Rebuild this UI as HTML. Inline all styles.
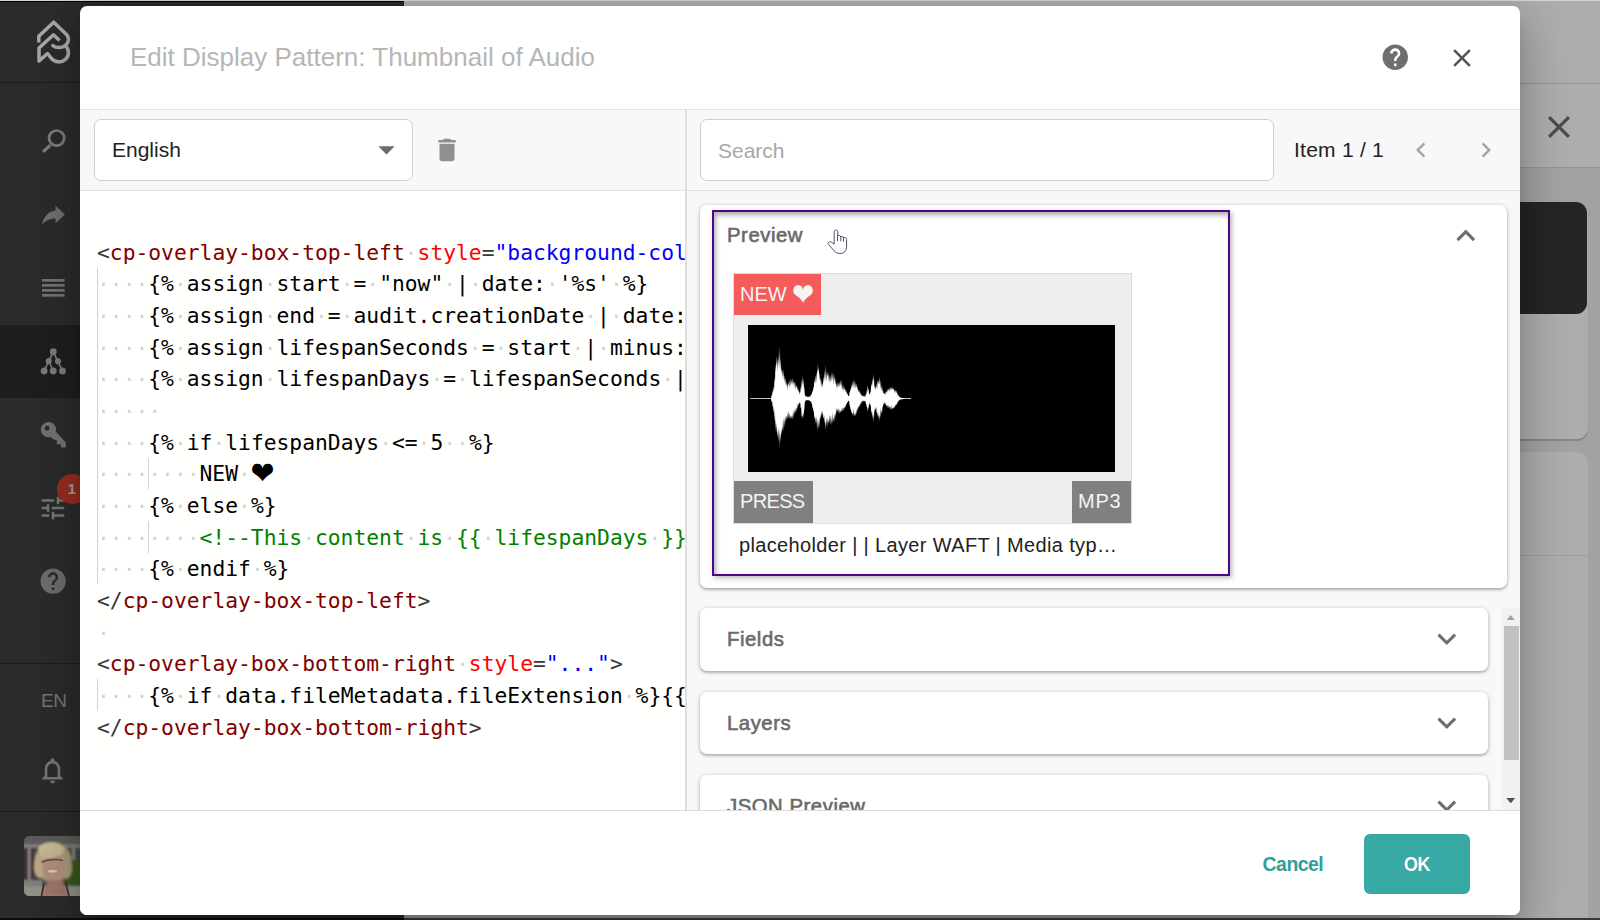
<!DOCTYPE html>
<html lang="en">
<head>
<meta charset="utf-8">
<title>Edit Display Pattern: Thumbnail of Audio</title>
<style>
*{box-sizing:border-box;margin:0;padding:0}
html,body{width:1600px;height:920px;overflow:hidden}
body{position:relative;font-family:"Liberation Sans",sans-serif;background:#a2a2a2;color:#222}
.abs{position:absolute}
/* ---------- page behind dialog ---------- */
#bgdark{left:0;top:0;width:404px;height:920px;background:#2a2a2a}
#bgright{left:404px;top:0;width:1196px;height:920px;background:#a2a2a2}
#topline{left:0;top:0;width:1600px;height:1px;background:#d6d6d6}
#topblack{left:0;top:1px;width:404px;height:1px;background:#000}
/* sidebar */
#side{left:0;top:0;width:80px;height:920px;background:#2b2b2b}
#side .div{position:absolute;left:0;width:80px;height:1px;background:#1c1c1c}
#side .active{position:absolute;left:0;top:325px;width:80px;height:73px;background:#1e1e1e}
#side svg{position:absolute}
/* ---------- dialog ---------- */
#dlg{left:80px;top:6px;width:1440px;height:909px;background:#fff;border-radius:7px;overflow:hidden;box-shadow:0 11px 15px -7px rgba(0,0,0,.2),0 24px 38px 3px rgba(0,0,0,.14),0 9px 46px 8px rgba(0,0,0,.12)}
#title{left:50px;top:34px;font-size:26px;color:#b6b6b6;white-space:nowrap;line-height:34px}
#hdrline{left:0;top:103px;width:1440px;height:1px;background:#e2e2e2}
#toolbar{left:0;top:104px;width:1440px;height:80px;background:#f8f8f8}
#tbline{left:0;top:184px;width:1440px;height:1px;background:#e0e0e0}
#vline{left:605px;top:104px;width:2px;height:700px;background:#dedede}
#select{left:14px;top:113px;width:319px;height:62px;background:#fff;border:1px solid #cecece;border-radius:7px}
#select span{position:absolute;left:17px;top:17px;font-size:21px;line-height:26px;color:#222}
#search{left:620px;top:113px;width:574px;height:62px;background:#fff;border:1px solid #cecece;border-radius:7px}
#search span{position:absolute;left:17px;top:17.5px;font-size:21px;line-height:26px;color:#a8a8a8}
#itemtxt{left:1214px;top:131px;font-size:21px;line-height:26px;color:#222;white-space:nowrap;letter-spacing:.25px}
/* editor */
#editor{left:0;top:185px;width:605px;height:619px;background:#fffffe;overflow:hidden}
.ln{position:absolute;left:17px;height:32px;line-height:32px;white-space:pre;font-family:"DejaVu Sans Mono","Liberation Mono",monospace;font-size:21.3px;color:#000}
.ws{color:#d2d2d2;font-family:"Liberation Mono",monospace;font-size:21.369px;position:relative;top:0}
.tg{color:#800000}.dl{color:#383838}.at{color:#ff0000}.st{color:#0000ff}.cm{color:#008000}
.hrt{font-family:"DejaVu Sans",sans-serif;font-size:28.7px;display:inline-block;line-height:20px;color:#000;transform:translate(-.3px,1.9px) scale(1,1.1)}
.guide{position:absolute;width:1px;background:#d3d3d3}
/* right panel */
#right{left:607px;top:185px;width:833px;height:619px;background:#f8f8f8;overflow:hidden}
.card{position:absolute;background:#fff;border-radius:7px;box-shadow:0 1px 4px rgba(0,0,0,.28),0 2px 2px rgba(0,0,0,.12)}
.card .lbl{position:absolute;left:27px;font-size:20.3px;color:#6a6a6a;-webkit-text-stroke:.6px #6a6a6a;letter-spacing:.55px;white-space:nowrap;line-height:27px}
#pbox{left:12px;top:5px;width:518px;height:366px;border:2px solid #4f0585;box-shadow:inset 2px 3px 5px rgba(0,0,0,.32),2px 2px 5px rgba(0,0,0,.28)}
#thumb{left:19px;top:61px;width:399px;height:251px;background:#eee;border:1px solid #dcdcdc}
.bdg{position:absolute;color:#f4f4f4;font-size:20px;line-height:41px;padding-left:6px;white-space:nowrap}
.bdg .wh{font-family:"DejaVu Sans",sans-serif;font-size:26.5px;display:inline-block;line-height:20px;transform:translate(-.2px,3px) scale(1,1.16);vertical-align:baseline}
#cap{left:25px;top:320px;font-size:20px;line-height:26px;color:#222;white-space:nowrap;letter-spacing:.35px}
.chev{left:727.7px;top:12px;width:37.6px;height:37.6px}
#sbar{left:815px;top:417px;width:18px;height:202px;background:#f1f1f1}
#sthumb{left:1.5px;top:18px;width:15px;height:134px;background:#c1c1c1}
/* footer */
#ftline{left:0;top:804px;width:1440px;height:1px;background:#dcdcdc}
#footer{left:0;top:805px;width:1440px;height:104px;background:#fff}
#ok{left:1284px;top:828px;width:106px;height:60px;border-radius:6px;background:#38a9a5;color:#fff;font-size:19.5px;font-weight:bold;text-align:center;line-height:60px;letter-spacing:-.6px}
#ok span{display:inline-block;transform:scaleX(.93)}
#cancel{left:1182.6px;top:844.5px;font-size:19.4px;font-weight:bold;color:#2ea09c;line-height:26px;letter-spacing:-.5px}
</style>
</head>
<body>
<div id="bgdark" class="abs"></div>
<div id="bgright" class="abs"></div>
<div id="side" class="abs">
  <div class="active"></div>
  <div class="div" style="top:82px"></div>
  <div class="div" style="top:663px"></div>
  <div class="div" style="top:811px"></div>
<!--sbicons-->
<svg style="left:20px;top:10px" width="70" height="70" viewBox="0 0 920 920"><g fill="none" stroke="#a7a7a7" stroke-width="46" stroke-linejoin="round" stroke-linecap="round"><path d="M247 428V345L443 160 608 318C650 362 645 430 592 470 650 510 650 600 600 648 545 700 455 690 410 632L362 572 250 670V500L440 325 520 400" stroke-linecap="butt"/><path d="M592 470C540 505 470 500 432 468"/></g></svg>
<svg style="left:30px;top:115px" width="50" height="50" viewBox="0 0 920 920"><g fill="none" stroke="#7b7b7b"><circle cx="490" cy="425" r="140" stroke-width="50"/><path d="M372 556L240 678" stroke-width="60"/></g></svg>
<svg style="left:30px;top:190px" width="50" height="50" viewBox="0 0 920 920"><path fill="#6f6f6f" d="M222 635C250 470 360 385 470 375V288L642 450 470 612V525C370 520 290 560 222 635z"/></svg>
<svg style="left:42px;top:279px" width="23" height="18" viewBox="0 0 23 18"><g fill="#737373"><rect x="0" y="0" width="22.6" height="2.7"/><rect x="0" y="5" width="22.6" height="2.7"/><rect x="0" y="10" width="22.6" height="2.7"/><rect x="0" y="15" width="22.6" height="2.7"/></g></svg>
<svg style="left:30px;top:337px" width="50" height="50" viewBox="0 0 920 920"><g stroke="#7a7a7a" stroke-width="30" fill="#7a7a7a"><path d="M428 272L260 625M345 445L428 625M428 272L598 625" fill="none"/><circle cx="428" cy="272" r="48" /><circle cx="345" cy="445" r="42"/><circle cx="515" cy="448" r="42"/><circle cx="260" cy="625" r="48"/><circle cx="428" cy="625" r="48"/><circle cx="598" cy="625" r="48"/></g></svg>
<svg style="left:30px;top:410px" width="50" height="50" viewBox="0 0 920 920"><path fill="#717171" fill-rule="evenodd" d="M340 222a140 140 0 1 0 40 274L430 540 495 560V630H570V690H660V600L476 400A140 140 0 0 0 340 222zM315 292a44 44 0 1 1 0 88 44 44 0 0 1 0-88z"/></svg>
<svg style="left:38.30px;top:493.00px" width="30.00" height="30.00" viewBox="0 0 24 24" ><path fill="#757575" d="M3 17v2h6v-2H3zM3 5v2h10V5H3zm10 16v-2h8v-2h-8v-2h-2v6h2zM7 9v2H3v2h4v2h2V9H7zm14 4v-2H11v2h10zm-6-4h2V7h4V5h-4V3h-2v6z"/></svg>
<div style="position:absolute;left:57px;top:473.5px;width:30.5px;height:30.5px;border-radius:50%;background:#952c1e;color:#9c9c9c;font-weight:bold;font-size:15.5px;line-height:30px;text-align:left;padding-left:10.5px">1</div>
<svg style="left:38.15px;top:566.25px" width="30.30" height="30.30" viewBox="0 0 24 24" ><path fill="#6c6c6c" d="M12 2C6.48 2 2 6.48 2 12s4.48 10 10 10 10-4.48 10-10S17.52 2 12 2zm1 17h-2v-2h2v2zm2.07-7.75l-.9.92C13.45 12.9 13 13.5 13 15h-2v-.5c0-1.1.45-2.1 1.17-2.83l1.24-1.26c.37-.36.59-.86.59-1.41 0-1.1-.9-2-2-2s-2 .9-2 2H8c0-2.21 1.79-4 4-4s4 1.79 4 4c0 .88-.36 1.68-.93 2.25z"/></svg>
<div style="position:absolute;left:41px;top:690px;font-size:19px;line-height:22px;color:#747474;letter-spacing:-0.3px">EN</div>
<svg style="left:37.20px;top:755.08px" width="31.00" height="31.00" viewBox="0 0 24 24" ><path fill="#757575" d="M12 22c1.1 0 2-.9 2-2h-4c0 1.1.9 2 2 2zm6-6v-5c0-3.07-1.63-5.64-4.5-6.320V4c0-.83-.67-1.500-1.500-1.500s-1.500.67-1.500 1.500v.68C7.640 5.360 6 7.920 6 11v5l-2 2v1h16v-1l-2-2zm-2 1H8v-6c0-2.480 1.510-4.500 4-4.500s4 2.020 4 4.500v6z"/></svg>
<svg style="left:23.5px;top:836px" width="64" height="60" viewBox="0 0 64 60"><defs><clipPath id="avc"><rect width="70" height="60" rx="5.5"/></clipPath><filter id="avb" x="-20%" y="-20%" width="140%" height="140%"><feGaussianBlur stdDeviation="1.3"/></filter><filter id="avb2" x="-20%" y="-20%" width="140%" height="140%"><feGaussianBlur stdDeviation="0.7"/></filter></defs><g clip-path="url(#avc)"><rect width="70" height="60" fill="#5b5b59"/><g filter="url(#avb)"><rect x="-4" y="8.5" width="74" height="3" fill="#84847f"/><rect x="-4" y="12" width="20" height="36" fill="#3d3030"/><rect x="4" y="12" width="2.5" height="36" fill="#8f8a88"/><rect x="10" y="12" width="2" height="30" fill="#5a4e4e"/><rect x="44" y="12" width="26" height="12" fill="#4a4a46"/><rect x="48" y="12" width="3" height="14" fill="#85857f"/><rect x="40" y="24" width="30" height="26" fill="#3a571f"/><rect x="-4" y="44" width="22" height="20" fill="#7d8078"/><rect x="-4" y="50" width="74" height="14" fill="#8f9186"/><ellipse cx="29" cy="26" rx="18.5" ry="20" fill="#a99a78"/><ellipse cx="27" cy="14" rx="13" ry="8" fill="#c6b893"/><ellipse cx="16" cy="30" rx="6" ry="12" fill="#b7a985"/><ellipse cx="42" cy="32" rx="6" ry="11" fill="#a8997a"/><path d="M19 60L24 44H38L44 60z" fill="#9a7468"/><ellipse cx="28.5" cy="31" rx="10.5" ry="13.5" fill="#b08d7b"/><ellipse cx="24" cy="18" rx="9" ry="4.5" fill="#c4b591"/></g><g filter="url(#avb2)"><path d="M17.5 26.5C22 23.5 33 22.5 39 24.5" stroke="#6a4e3e" stroke-width="1.6" fill="none"/><ellipse cx="28.5" cy="35.2" rx="4.6" ry="1.3" fill="#d9c6bf"/><path d="M20 47L17.5 60M41.5 46L45 60" stroke="#4b2d2a" stroke-width="1.8" fill="none"/></g></g></svg>
<!--/sbicons-->
</div>
<!--bgstuff-->
<div class="abs" style="left:404px;top:0;width:1196px;height:167px;background:#adadad"></div>
<div class="abs" style="left:404px;top:83px;width:1196px;height:1px;background:#939393"></div>
<div class="abs" style="left:404px;top:167px;width:1196px;height:1px;background:#959595"></div>
<svg class="abs" style="left:1540.20px;top:108.00px" width="38.00" height="38.00" viewBox="0 0 24 24" ><path fill="#4b4b4b" d="M19 6.41L17.59 5 12 10.590 6.41 5 5 6.41 10.59 12 5 17.59 6.41 19 12 13.41 17.59 19 19 17.59 13.41 12z"/></svg>
<div class="abs" style="left:1400px;top:202px;width:188px;height:237px;border-radius:11px;background:#adadad;box-shadow:0 2px 1px rgba(0,0,0,.18)"></div>
<div class="abs" style="left:1400px;top:202px;width:187px;height:112px;border-radius:11px;background:#252525"></div>
<div class="abs" style="left:1400px;top:452px;width:188px;height:520px;border-radius:11px;background:#adadad"></div>
<div class="abs" style="left:1400px;top:555px;width:188px;height:1px;background:#9b9b9b"></div>
<!--/bgstuff-->
<div class="abs" style="left:0;top:918px;width:1600px;height:2px;background:#3a3a3a"></div>
<div class="abs" style="left:0;top:918px;width:404px;height:2px;background:#0c0c0c"></div>
<div id="topline" class="abs"></div>
<div id="topblack" class="abs"></div>

<div id="dlg" class="abs">
  <div id="title" class="abs">Edit Display Pattern: Thumbnail of Audio</div>
  <div id="hdrline" class="abs"></div>
  <div id="toolbar" class="abs"></div>
  <div id="tbline" class="abs"></div>
  <div id="select" class="abs"><span>English</span></div>
  <div id="search" class="abs"><span>Search</span></div>
  <div id="itemtxt" class="abs">Item 1 / 1</div>
  <div id="editor" class="abs">
<div class="ln" style="top:45.7px"><span class="dl">&lt;</span><span class="tg">cp-overlay-box-top-left</span><span class="ws">·</span><span class="at">style</span><span class="dl">=</span><span class="st">"background-col</span></div>
<div class="ln" style="top:77.37px"><span class="ws">····</span>{%<span class="ws">·</span>assign<span class="ws">·</span>start<span class="ws">·</span>=<span class="ws">·</span>"now"<span class="ws">·</span>|<span class="ws">·</span>date:<span class="ws">·</span>'%s'<span class="ws">·</span>%}</div>
<div class="ln" style="top:109.04px"><span class="ws">····</span>{%<span class="ws">·</span>assign<span class="ws">·</span>end<span class="ws">·</span>=<span class="ws">·</span>audit.creationDate<span class="ws">·</span>|<span class="ws">·</span>date:</div>
<div class="ln" style="top:140.71px"><span class="ws">····</span>{%<span class="ws">·</span>assign<span class="ws">·</span>lifespanSeconds<span class="ws">·</span>=<span class="ws">·</span>start<span class="ws">·</span>|<span class="ws">·</span>minus:</div>
<div class="ln" style="top:172.38px"><span class="ws">····</span>{%<span class="ws">·</span>assign<span class="ws">·</span>lifespanDays<span class="ws">·</span>=<span class="ws">·</span>lifespanSeconds<span class="ws">·</span>|</div>
<div class="ln" style="top:204.05px"><span class="ws">·····</span></div>
<div class="ln" style="top:235.72px"><span class="ws">····</span>{%<span class="ws">·</span>if<span class="ws">·</span>lifespanDays<span class="ws">·</span>&lt;=<span class="ws">·</span>5<span class="ws">··</span>%}</div>
<div class="ln" style="top:267.39px"><span class="ws">········</span>NEW<span class="ws">·</span><span class="hrt">❤</span></div>
<div class="ln" style="top:299.06px"><span class="ws">····</span>{%<span class="ws">·</span>else<span class="ws">·</span>%}</div>
<div class="ln" style="top:330.73px"><span class="ws">········</span><span class="cm">&lt;!--This</span><span class="ws">·</span><span class="cm">content</span><span class="ws">·</span><span class="cm">is</span><span class="ws">·</span><span class="cm">{{</span><span class="ws">·</span><span class="cm">lifespanDays</span><span class="ws">·</span><span class="cm">}}</span></div>
<div class="ln" style="top:362.4px"><span class="ws">····</span>{%<span class="ws">·</span>endif<span class="ws">·</span>%}</div>
<div class="ln" style="top:394.07px"><span class="dl">&lt;/</span><span class="tg">cp-overlay-box-top-left</span><span class="dl">&gt;</span></div>
<div class="ln" style="top:425.74px"><span class="ws">·</span></div>
<div class="ln" style="top:457.41px"><span class="dl">&lt;</span><span class="tg">cp-overlay-box-bottom-right</span><span class="ws">·</span><span class="at">style</span><span class="dl">=</span><span class="st">"..."</span><span class="dl">&gt;</span></div>
<div class="ln" style="top:489.08px"><span class="ws">····</span>{%<span class="ws">·</span>if<span class="ws">·</span>data.fileMetadata.fileExtension<span class="ws">·</span>%}{{</div>
<div class="ln" style="top:520.75px"><span class="dl">&lt;/</span><span class="tg">cp-overlay-box-bottom-right</span><span class="dl">&gt;</span></div>
<div class="guide" style="left:17px;top:76.67px;height:316.70px"></div>
<div class="guide" style="left:68px;top:266.69px;height:31.67px"></div>
<div class="guide" style="left:68px;top:330.03px;height:31.67px"></div>
<div class="guide" style="left:17px;top:488.38px;height:31.67px"></div>
</div><!--/editor-->
  <div id="right" class="abs">
  <div class="card" style="left:13px;top:14px;width:807px;height:383px">
    <div id="pbox" class="abs">
      <div class="lbl" style="left:13px;top:9.5px">Preview</div>
      <div id="thumb" class="abs">
        <svg class="abs" style="left:14px;top:51px" width="367" height="147" viewBox="0 0 367 147"><rect width="367" height="147" fill="#000"/><polygon points="2.1,73.3 2.5,73.3 3.0,73.3 3.4,73.3 3.9,73.3 4.3,73.3 4.8,73.3 5.3,73.3 5.7,73.3 6.2,73.3 6.6,73.3 7.1,73.3 7.5,73.3 8.0,73.3 8.4,73.3 8.9,73.3 9.3,73.3 9.8,73.3 10.2,73.3 10.7,73.3 11.1,73.3 11.6,73.3 12.0,73.3 12.5,73.3 12.9,73.3 13.4,73.3 13.8,73.3 14.3,73.3 14.7,73.3 15.2,73.3 15.7,73.3 16.1,73.3 16.6,73.3 17.0,73.3 17.5,73.3 17.9,73.3 18.4,73.3 18.8,73.3 19.3,73.3 19.7,73.2 20.2,73.2 20.6,73.2 21.1,73.2 21.5,73.2 22.0,73.2 22.4,73.2 22.9,73.2 23.3,71.7 23.8,69.9 24.2,69.4 24.7,65.2 25.1,67.6 25.6,61.2 26.1,64.8 26.5,51.9 27.0,57.6 27.4,38.4 27.9,46.7 28.3,30.2 28.8,40.9 29.2,33.3 29.7,46.6 30.1,31.7 30.6,41.4 31.0,24.5 31.5,44.6 31.9,21.2 32.4,45.4 32.8,34.0 33.3,46.7 33.7,44.3 34.2,53.6 34.6,44.6 35.1,51.0 35.5,44.0 36.0,56.4 36.5,50.0 36.9,57.4 37.4,52.6 37.8,60.3 38.3,56.6 38.7,61.1 39.2,58.2 39.6,65.5 40.1,58.1 40.5,60.8 41.0,55.8 41.4,63.2 41.9,54.5 42.3,62.0 42.8,53.0 43.2,59.7 43.7,54.0 44.1,59.3 44.6,52.3 45.0,61.5 45.5,54.9 45.9,58.6 46.4,56.7 46.9,63.3 47.3,56.8 47.8,65.3 48.2,59.5 48.7,62.8 49.1,61.2 49.6,65.4 50.0,62.9 50.5,66.6 50.9,66.0 51.4,69.9 51.8,66.4 52.3,67.8 52.7,61.3 53.2,64.8 53.6,54.4 54.1,61.2 54.5,50.4 55.0,59.9 55.4,53.1 55.9,61.3 56.3,62.9 56.8,69.7 57.3,70.4 57.7,71.6 58.2,71.6 58.6,71.6 59.1,71.7 59.5,71.7 60.0,71.8 60.4,71.8 60.9,71.8 61.3,71.7 61.8,70.9 62.2,71.9 62.7,69.8 63.1,70.6 63.6,68.6 64.0,68.3 64.5,65.2 64.9,67.3 65.4,60.7 65.8,64.2 66.3,55.1 66.7,57.8 67.2,49.6 67.7,58.9 68.1,47.7 68.6,58.3 69.0,44.7 69.5,48.4 69.9,38.9 70.4,46.5 70.8,42.4 71.3,56.2 71.7,46.6 72.2,55.7 72.6,53.3 73.1,63.7 73.5,54.9 74.0,60.8 74.4,57.7 74.9,62.7 75.3,51.3 75.8,58.0 76.2,45.2 76.7,56.6 77.1,39.1 77.6,56.0 78.1,43.2 78.5,56.5 79.0,48.2 79.4,51.7 79.9,46.5 80.3,56.2 80.8,46.2 81.2,58.2 81.7,49.4 82.1,58.1 82.6,49.2 83.0,56.9 83.5,46.5 83.9,56.0 84.4,46.8 84.8,55.5 85.3,47.5 85.7,59.7 86.2,49.9 86.6,56.2 87.1,52.4 87.5,59.6 88.0,56.5 88.5,63.8 88.9,58.5 89.4,63.2 89.8,57.1 90.3,62.3 90.7,57.1 91.2,62.5 91.6,56.5 92.1,60.8 92.5,54.5 93.0,61.0 93.4,54.8 93.9,64.2 94.3,59.2 94.8,65.7 95.2,59.8 95.7,66.5 96.1,61.6 96.6,64.9 97.0,63.7 97.5,67.3 97.9,64.0 98.4,68.9 98.9,66.3 99.3,69.9 99.8,68.3 100.2,70.9 100.7,71.1 101.1,71.0 101.6,67.6 102.0,66.6 102.5,62.7 102.9,66.3 103.4,58.8 103.8,62.7 104.3,55.4 104.7,63.4 105.2,55.1 105.6,63.1 106.1,54.1 106.5,63.5 107.0,55.3 107.4,64.0 107.9,57.9 108.3,62.9 108.8,58.6 109.3,65.3 109.7,61.2 110.2,67.4 110.6,64.3 111.1,67.9 111.5,65.1 112.0,68.7 112.4,67.4 112.9,70.3 113.3,68.7 113.8,71.4 114.2,70.2 114.7,71.2 115.1,70.6 115.6,71.7 116.0,70.7 116.5,71.9 116.9,70.9 117.4,71.5 117.8,68.8 118.3,69.7 118.7,65.0 119.2,67.5 119.7,59.7 120.1,65.0 120.6,63.2 121.0,69.3 121.5,67.9 121.9,69.9 122.4,67.1 122.8,66.6 123.3,59.0 123.7,60.9 124.2,53.6 124.6,61.2 125.1,48.8 125.5,57.3 126.0,51.7 126.4,63.5 126.9,60.6 127.3,65.6 127.8,61.6 128.2,62.6 128.7,58.2 129.1,64.8 129.6,55.0 130.1,59.6 130.5,54.7 131.0,59.1 131.4,51.6 131.9,60.0 132.3,55.2 132.8,63.9 133.2,59.7 133.7,66.1 134.1,61.8 134.6,66.6 135.0,65.6 135.5,68.9 135.9,68.1 136.4,69.4 136.8,67.4 137.3,70.2 137.7,66.5 138.2,68.0 138.6,65.4 139.1,67.7 139.5,63.8 140.0,66.4 140.5,63.6 140.9,65.3 141.4,62.2 141.8,67.3 142.3,61.7 142.7,65.1 143.2,61.7 143.6,65.8 144.1,61.3 144.5,64.4 145.0,63.4 145.4,65.2 145.9,63.0 146.3,67.6 146.8,64.4 147.2,68.3 147.7,64.2 148.1,67.2 148.6,65.6 149.0,69.6 149.5,67.8 149.9,71.0 150.4,69.6 150.9,71.8 151.3,71.3 151.8,72.1 152.2,72.6 152.7,72.7 153.1,72.7 153.6,72.8 154.0,72.8 154.5,72.9 154.9,73.0 155.4,73.0 155.8,73.1 156.3,73.1 156.7,73.2 157.2,73.3 157.6,73.3 158.1,73.3 158.5,73.3 159.0,73.3 159.4,73.3 159.9,73.3 160.3,73.3 160.8,73.3 161.3,73.3 161.7,73.3 162.2,73.3 162.6,73.3 163.1,73.3 163.1,73.9 162.6,73.9 162.2,73.9 161.7,73.9 161.3,73.9 160.8,73.9 160.3,73.9 159.9,73.9 159.4,73.9 159.0,73.9 158.5,73.9 158.1,73.9 157.6,74.0 157.2,74.0 156.7,74.0 156.3,74.1 155.8,74.1 155.4,74.1 154.9,74.2 154.5,74.2 154.0,74.3 153.6,74.3 153.1,74.4 152.7,74.4 152.2,74.5 151.8,74.8 151.3,75.5 150.9,75.2 150.4,76.6 149.9,76.2 149.5,78.1 149.0,78.2 148.6,80.5 148.1,78.8 147.7,81.2 147.2,79.4 146.8,82.7 146.3,81.2 145.9,83.2 145.4,82.0 145.0,84.2 144.5,82.4 144.1,84.4 143.6,80.2 143.2,85.4 142.7,80.8 142.3,85.5 141.8,80.6 141.4,84.0 140.9,80.5 140.5,83.8 140.0,79.2 139.5,83.2 139.1,80.0 138.6,81.6 138.2,79.7 137.7,80.1 137.3,77.4 136.8,79.4 136.4,76.8 135.9,79.2 135.5,78.3 135.0,81.5 134.6,81.6 134.1,87.2 133.7,85.2 133.2,89.4 132.8,83.0 132.3,92.8 131.9,89.3 131.4,95.9 131.0,90.2 130.5,93.8 130.1,88.0 129.6,91.4 129.1,86.1 128.7,88.8 128.2,81.4 127.8,85.5 127.3,82.2 126.9,86.5 126.4,83.5 126.0,94.4 125.5,88.8 125.1,98.0 124.6,86.7 124.2,93.1 123.7,85.8 123.3,88.4 122.8,80.5 122.4,80.7 121.9,76.7 121.5,80.0 121.0,78.5 120.6,84.3 120.1,82.0 119.7,87.1 119.2,82.2 118.7,82.1 118.3,78.9 117.8,78.5 117.4,75.7 116.9,76.3 116.5,75.7 116.0,76.6 115.6,75.6 115.1,76.8 114.7,75.6 114.2,76.6 113.8,76.3 113.3,78.7 112.9,76.9 112.4,80.2 112.0,78.4 111.5,82.5 111.1,79.9 110.6,84.2 110.2,80.6 109.7,86.2 109.3,81.7 108.8,89.8 108.3,83.8 107.9,91.3 107.4,86.9 107.0,91.8 106.5,87.7 106.1,91.3 105.6,83.4 105.2,91.7 104.7,87.4 104.3,89.9 103.8,86.9 103.4,88.1 102.9,83.9 102.5,84.8 102.0,81.1 101.6,80.4 101.1,75.9 100.7,75.8 100.2,75.7 99.8,77.4 99.3,76.8 98.9,79.4 98.4,78.1 97.9,81.9 97.5,79.5 97.0,83.8 96.6,81.8 96.1,83.6 95.7,81.9 95.2,86.3 94.8,82.7 94.3,86.2 93.9,82.7 93.4,87.2 93.0,85.5 92.5,87.7 92.1,85.1 91.6,89.2 91.2,83.5 90.7,88.4 90.3,83.0 89.8,87.0 89.4,83.4 88.9,86.3 88.5,82.4 88.0,90.2 87.5,87.6 87.1,93.7 86.6,88.6 86.2,96.8 85.7,92.2 85.3,96.9 84.8,86.9 84.4,98.7 83.9,93.7 83.5,100.5 83.0,90.3 82.6,100.5 82.1,90.1 81.7,99.2 81.2,89.4 80.8,98.4 80.3,94.4 79.9,102.5 79.4,93.0 79.0,98.5 78.5,92.3 78.1,102.1 77.6,96.4 77.1,105.7 76.7,89.8 76.2,97.8 75.8,91.9 75.3,93.1 74.9,86.5 74.4,90.9 74.0,85.0 73.5,91.8 73.1,86.5 72.6,94.8 72.2,89.8 71.7,103.6 71.3,91.4 70.8,103.9 70.4,93.9 69.9,107.1 69.5,93.5 69.0,103.6 68.6,90.7 68.1,98.4 67.7,91.1 67.2,99.1 66.7,90.5 66.3,94.6 65.8,83.6 65.4,88.6 64.9,82.6 64.5,82.9 64.0,78.8 63.6,78.9 63.1,76.0 62.7,77.1 62.2,76.1 61.8,76.0 61.3,75.5 60.9,75.3 60.4,75.3 60.0,75.3 59.5,75.3 59.1,75.3 58.6,75.3 58.2,75.3 57.7,75.3 57.3,76.5 56.8,77.5 56.3,84.4 55.9,86.4 55.4,92.8 55.0,87.4 54.5,93.9 54.1,90.3 53.6,92.0 53.2,82.1 52.7,83.6 52.3,78.1 51.8,78.8 51.4,76.7 50.9,79.1 50.5,78.8 50.0,82.1 49.6,78.8 49.1,84.4 48.7,82.2 48.2,86.7 47.8,82.8 47.3,88.3 46.9,84.5 46.4,90.0 45.9,84.0 45.5,93.7 45.0,86.5 44.6,95.0 44.1,89.8 43.7,94.3 43.2,90.3 42.8,94.3 42.3,89.7 41.9,93.4 41.4,87.5 41.0,94.4 40.5,85.5 40.1,93.6 39.6,87.2 39.2,93.9 38.7,90.4 38.3,95.5 37.8,90.2 37.4,98.0 36.9,92.4 36.5,102.8 36.0,93.8 35.5,106.7 35.1,92.6 34.6,107.1 34.2,101.3 33.7,110.0 33.3,102.9 32.8,116.0 32.4,106.9 31.9,123.9 31.5,104.0 31.0,117.4 30.6,101.2 30.1,116.6 29.7,105.7 29.2,112.1 28.8,98.1 28.3,107.7 27.9,95.4 27.4,106.0 27.0,89.1 26.5,96.6 26.1,83.5 25.6,88.2 25.1,81.6 24.7,82.3 24.2,76.8 23.8,77.2 23.3,75.5 22.9,74.0 22.4,74.0 22.0,74.0 21.5,74.0 21.1,74.0 20.6,74.0 20.2,74.0 19.7,74.0 19.3,74.0 18.8,74.0 18.4,74.0 17.9,74.0 17.5,74.0 17.0,74.0 16.6,73.9 16.1,73.9 15.7,73.9 15.2,73.9 14.7,73.9 14.3,73.9 13.8,73.9 13.4,73.9 12.9,73.9 12.5,73.9 12.0,73.9 11.6,73.9 11.1,73.9 10.7,73.9 10.2,73.9 9.8,73.9 9.3,73.9 8.9,73.9 8.4,73.9 8.0,73.9 7.5,73.9 7.1,73.9 6.6,73.9 6.2,73.9 5.7,73.9 5.3,73.9 4.8,73.9 4.3,73.9 3.9,73.9 3.4,73.9 3.0,73.9 2.5,73.9 2.1,73.9" fill="#fff" filter="url(#wb)"/><defs><filter id="wb" x="-5%" y="-5%" width="110%" height="110%"><feGaussianBlur stdDeviation="0.45"/></filter></defs></svg>
        <div class="bdg" style="left:0;top:0;width:87px;height:41px;background:#f45b5b">NEW <span class="wh">❤</span></div>
        <div class="bdg" style="left:0;bottom:0;width:79px;height:42px;background:#808080;letter-spacing:-.65px">PRESS</div>
        <div class="bdg" style="right:0;bottom:0;width:59px;height:42px;background:#808080;letter-spacing:.8px">MP3</div>
      </div>
      <div id="cap" class="abs">placeholder | | Layer WAFT | Media typ…</div>
    </div>
    <svg class="abs" style="left:746.7px;top:11.6px" width="37.6" height="37.6" viewBox="0 0 24 24"><path fill="#6e6e6e" d="M12 8l-6 6 1.41 1.41L12 10.83l4.59 4.58L18 14z"/></svg>
  </div>
  <div class="card" style="left:13px;top:417px;width:788px;height:63px"><div class="lbl" style="top:18px">Fields</div>
    <svg class="abs chev" viewBox="0 0 24 24"><path fill="#6e6e6e" d="M16.59 8.59L12 13.17 7.41 8.59 6 10l6 6 6-6z"/></svg></div>
  <div class="card" style="left:13px;top:501px;width:788px;height:62px"><div class="lbl" style="top:18px">Layers</div>
    <svg class="abs chev" viewBox="0 0 24 24"><path fill="#6e6e6e" d="M16.59 8.59L12 13.17 7.41 8.59 6 10l6 6 6-6z"/></svg></div>
  <div class="card" style="left:13px;top:584px;width:788px;height:62px"><div class="lbl" style="top:18px">JSON Preview</div>
    <svg class="abs chev" viewBox="0 0 24 24"><path fill="#6e6e6e" d="M16.59 8.59L12 13.17 7.41 8.59 6 10l6 6 6-6z"/></svg></div>
  <div id="sbar" class="abs"><div id="sthumb" class="abs"></div>
    <svg class="abs" style="left:4.2px;top:7px" width="9.4" height="5.4" viewBox="0 0 8 5"><path d="M0 5L4 0 8 5z" fill="#a3a3a3"/></svg>
    <svg class="abs" style="left:4.2px;bottom:7px" width="9.4" height="5.4" viewBox="0 0 8 5"><path d="M0 0L4 5 8 0z" fill="#505050"/></svg>
  </div>
</div><!--/right-->
  <div id="vline" class="abs"></div>
  <!--dlgicons-->
<svg class="abs" style="left:1299.95px;top:36.25px" width="30.50" height="30.50" viewBox="0 0 24 24" ><path fill="#6f6f6f" d="M12 2C6.48 2 2 6.48 2 12s4.48 10 10 10 10-4.48 10-10S17.52 2 12 2zm1 17h-2v-2h2v2zm2.07-7.75l-.9.92C13.45 12.9 13 13.5 13 15h-2v-.5c0-1.1.45-2.1 1.17-2.83l1.24-1.26c.37-.36.59-.86.59-1.41 0-1.1-.9-2-2-2s-2 .9-2 2H8c0-2.21 1.79-4 4-4s4 1.79 4 4c0 .88-.36 1.68-.93 2.25z"/></svg>
<svg class="abs" style="left:1366.70px;top:36.50px" width="30.00" height="30.00" viewBox="0 0 24 24" ><path fill="#555" d="M19 6.41L17.59 5 12 10.590 6.41 5 5 6.41 10.59 12 5 17.59 6.41 19 12 13.41 17.59 19 19 17.59 13.41 12z"/></svg>
<svg class="abs" style="left:1325.58px;top:129.20px" width="30.00" height="30.00" viewBox="0 0 24 24" ><path fill="#a6a6a6" d="M15.41 7.41L14 6l-6 6 6 6 1.41-1.41L10.83 12z"/></svg>
<svg class="abs" style="left:1391.33px;top:129.20px" width="30.00" height="30.00" viewBox="0 0 24 24" ><path fill="#a6a6a6" d="M10 6L8.59 7.41 13.17 12l-4.58 4.59L10 18l6-6z"/></svg>
<svg class="abs" style="left:351.80px;top:129.20px" width="30.00" height="30.00" viewBox="0 0 24 24" ><path fill="#8f8f8f" d="M6 19c0 1.1.9 2 2 2h8c1.1 0 2-.9 2-2V7H6v12zM19 4h-3.5l-1-1h-5l-1 1H5v2h14V4z"/></svg>
<svg class="abs" style="left:287.30px;top:123.89px" width="39.00" height="39.00" viewBox="0 0 24 24" ><path fill="#6a6a6a" d="M7 10l5 5 5-5z"/></svg>
<svg class="abs" style="left:730px;top:209px" width="60" height="55" viewBox="0 0 1004 920"><path fill="#fff" stroke="#3c3f58" stroke-width="15" stroke-linejoin="round" stroke-linecap="round" d="M405 480V282c0-42 60-42 60 0v63c18-6 50-2 50 18 14-8 45-4 45 15 20-8 52 2 52 32v110c0 80-40 125-112 125-40 0-70-18-95-42L312 492c-22-26 8-60 36-44z"/><path fill="none" stroke="#3c3f58" stroke-width="15" stroke-linecap="round" d="M460 345v88M515 365v68M560 380v58"/></svg>
<!--/dlgicons-->
  <div id="ftline" class="abs"></div>
  <div id="footer" class="abs"></div>
  <div id="cancel" class="abs">Cancel</div>
  <div id="ok" class="abs"><span>OK</span></div>
</div>
</body>
</html>
